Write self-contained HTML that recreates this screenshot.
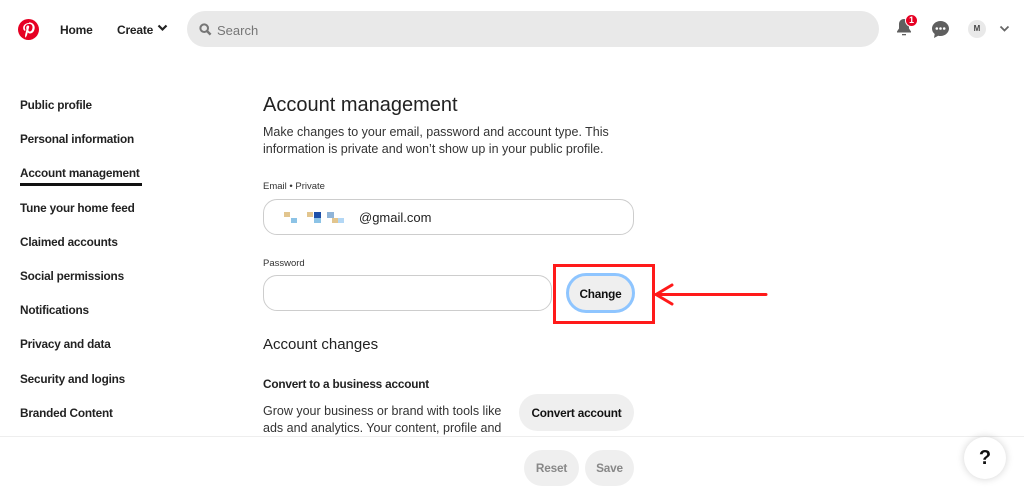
<!DOCTYPE html>
<html><head><meta charset="utf-8"><style>
*{margin:0;padding:0;box-sizing:border-box}
body{width:1024px;height:496px;overflow:hidden;background:#fff;font-family:"Liberation Sans",sans-serif;color:#111;position:relative}
.a{position:absolute;white-space:nowrap}
.nav{font-size:12px;font-weight:bold;color:#222;letter-spacing:-.2px}
.side{font-size:11.8px;font-weight:bold;color:#222;left:20px;letter-spacing:-.2px}
.p{font-size:12.5px;color:#333;line-height:17px}
.btn{position:absolute;background:#efefef;border-radius:20px;font-size:11.8px;font-weight:bold;letter-spacing:-.2px;display:flex;align-items:center;justify-content:center}
</style></head><body>
<svg class="a" style="left:18px;top:19px" width="21" height="21" viewBox="0 0 24 24"><circle cx="12" cy="12" r="12" fill="#e60023"/><path d="M12.4 4.5c-4.3 0-6.5 3-6.5 5.600 0 1.6.6 2.9 1.9 3.4.2.1.4 0 .5-.2l.2-.7c.1-.2 0-.3-.1-.5-.4-.5-.6-1.100-.6-1.900 0-2.500 1.800-4.700 4.800-4.700 2.600 0 4 1.600 4 3.700 0 2.800-1.200 5.100-3.100 5.100-1 0-1.800-.9-1.600-1.900.3-1.200.9-2.600.9-3.500 0-.8-.4-1.500-1.400-1.500-1.100 0-2 1.100-2 2.700 0 1 .3 1.600.3 1.600l-1.400 5.700c-.4 1.600 0 3.600 0 3.800l.3.1c.1-.2 1.400-1.800 1.800-3.300l.7-2.700c.4.7 1.400 1.300 2.500 1.300 3.300 0 5.500-3 5.500-7 0-3-2.600-5.800-6.500-5.800z" fill="#fff"/></svg>
<div class="a nav" style="left:60px;top:23px">Home</div>
<div class="a nav" style="left:117px;top:23px">Create</div>
<svg class="a" style="left:157px;top:24px" width="11" height="8" viewBox="0 0 11 8"><path d="M1.5 1.5l4 4 4-4" stroke="#222" stroke-width="2.2" fill="none"/></svg>
<div class="a" style="left:187px;top:11px;width:692px;height:36px;background:#e9e9e9;border-radius:18px"></div>
<svg class="a" style="left:199px;top:23px" width="13" height="13" viewBox="0 0 13 13"><circle cx="5.2" cy="5.2" r="3.8" stroke="#767676" stroke-width="2" fill="none"/><path d="M8 8l3.6 3.6" stroke="#767676" stroke-width="2.4"/></svg>
<div class="a" style="left:217px;top:23px;font-size:13px;color:#767676">Search</div>
<svg class="a" style="left:895px;top:18px" width="18" height="20" viewBox="0 0 18 20"><path d="M9 1c-3 0-5 2.200-5 5.300v4.200L2 13.500v1h14v-1l-2-3V6.300C14 3.200 12 1 9 1z" fill="#5f5f5f"/><path d="M7 16h4v1.300H7z" fill="#5f5f5f"/></svg>
<div class="a" style="left:905px;top:14px;width:13px;height:13px;border-radius:50%;background:#e60023;border:1px solid #fff;color:#fff;font-size:9px;font-weight:bold;text-align:center;line-height:11px">1</div>
<svg class="a" style="left:931px;top:20px" width="19" height="19" viewBox="0 0 19 19"><path d="M9.500 1C4.800 1 1 4.400 1 8.500c0 2.200 1 4.200 2.700 5.500L3 18l4.200-2.300c.7.2 1.500.3 2.300.3C14.200 16 18 12.600 18 8.500S14.200 1 9.500 1z" fill="#5f5f5f"/><circle cx="5.8" cy="8.5" r="1.3" fill="#fff"/><circle cx="9.5" cy="8.5" r="1.3" fill="#fff"/><circle cx="13.2" cy="8.5" r="1.3" fill="#fff"/></svg>
<div class="a" style="left:968px;top:20px;width:18px;height:18px;border-radius:50%;background:#e9e9e9;font-size:8px;font-weight:bold;color:#444;text-align:center;line-height:18px">M</div>
<svg class="a" style="left:999px;top:25px" width="11" height="8" viewBox="0 0 11 8"><path d="M1.5 1.5l4 4 4-4" stroke="#666" stroke-width="1.8" fill="none"/></svg>

<div class="a side" style="top:98px">Public profile</div>
<div class="a side" style="top:132px">Personal information</div>
<div class="a side" style="top:166px">Account management</div>
<div class="a" style="left:20px;top:183px;width:122px;height:3px;background:#111"></div>
<div class="a side" style="top:201px">Tune your home feed</div>
<div class="a side" style="top:235px">Claimed accounts</div>
<div class="a side" style="top:269px">Social permissions</div>
<div class="a side" style="top:303px">Notifications</div>
<div class="a side" style="top:337px">Privacy and data</div>
<div class="a side" style="top:372px">Security and logins</div>
<div class="a side" style="top:406px">Branded Content</div>

<div class="a" style="left:263px;top:94px;font-size:20px;color:#222">Account management</div>
<div class="a p" style="left:263px;top:124px">Make changes to your email, password and account type. This<br>information is private and won’t show up in your public profile.</div>
<div class="a" style="left:263px;top:181px;font-size:9.5px;color:#333">Email • Private</div>
<div class="a" style="left:263px;top:199px;width:371px;height:36px;border:1.5px solid #cdcdcd;border-radius:14px"></div>
<div class="a" style="left:284px;top:212px;width:6px;height:5px;background:#e2c58e"></div>
<div class="a" style="left:291px;top:218px;width:6px;height:5px;background:#8cc3e6"></div>
<div class="a" style="left:307px;top:212px;width:6px;height:5px;background:#e2c58e"></div>
<div class="a" style="left:314px;top:212px;width:7px;height:6px;background:#1d4fa8"></div>
<div class="a" style="left:314px;top:218px;width:7px;height:5px;background:#8cc3e6"></div>
<div class="a" style="left:327px;top:212px;width:7px;height:6px;background:#8fb4d8"></div>
<div class="a" style="left:332px;top:218px;width:6px;height:5px;background:#e2c58e"></div>
<div class="a" style="left:338px;top:218px;width:6px;height:5px;background:#b3d7f5"></div>
<div class="a" style="left:359px;top:210px;font-size:13px;color:#222">@gmail.com</div>
<div class="a" style="left:263px;top:258px;font-size:9.5px;color:#333">Password</div>
<div class="a" style="left:263px;top:275px;width:289px;height:36px;border:1.5px solid #cdcdcd;border-radius:14px"></div>
<div class="btn" style="left:566px;top:273px;width:69px;height:40px;border:3px solid #8ec5ff;padding-top:2px">Change</div>
<div class="a" style="left:553px;top:264px;width:102px;height:60px;border:3px solid #ff1a1a"></div>
<svg class="a" style="left:652px;top:282px" width="120" height="26" viewBox="0 0 120 26"><path d="M4 12.5H114" stroke="#ff1a1a" stroke-width="3" stroke-linecap="round"/><path d="M20 3L4 12.5 20 22" stroke="#ff1a1a" stroke-width="3" fill="none" stroke-linecap="round" stroke-linejoin="round"/></svg>

<div class="a" style="left:263px;top:336px;font-size:15px;color:#222">Account changes</div>
<div class="a" style="left:263px;top:377px;font-size:11.8px;font-weight:bold;color:#222;letter-spacing:-.2px">Convert to a business account</div>
<div class="a p" style="left:263px;top:403px">Grow your business or brand with tools like<br>ads and analytics. Your content, profile and</div>
<div class="btn" style="left:519px;top:394px;width:115px;height:37px">Convert account</div>

<div class="a" style="left:0;top:436px;width:1024px;height:60px;background:#fff;border-top:1px solid #eee"></div>
<div class="btn" style="left:524px;top:450px;width:55px;height:36px;color:#888">Reset</div>
<div class="btn" style="left:585px;top:450px;width:49px;height:36px;color:#888">Save</div>
<div class="a" style="left:964px;top:437px;width:42px;height:42px;border-radius:50%;background:#fff;box-shadow:0 0 8px rgba(0,0,0,.18);font-size:20px;font-weight:bold;text-align:center;line-height:42px">?</div>
</body></html>
